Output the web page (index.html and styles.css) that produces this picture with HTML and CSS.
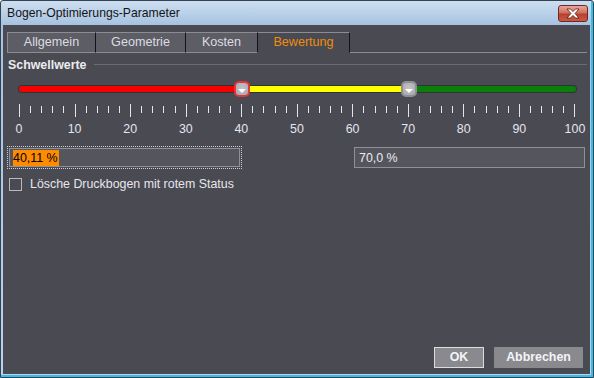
FILE: index.html
```html
<!DOCTYPE html>
<html lang="de">
<head>
<meta charset="utf-8">
<title>Bogen-Optimierungs-Parameter</title>
<link rel="stylesheet" href="styles.css">
</head>
<body>
<div class="window">
  <div class="titlebar">
    <span class="title">Bogen-Optimierungs-Parameter</span>
    <span class="close"><svg width="16" height="11" viewBox="0 0 16 11"><path d="M2 1 L5.5 1 L8 3.6 L10.5 1 L14 1 L10 5.5 L14 10 L10.5 10 L8 7.4 L5.5 10 L2 10 L6 5.5 Z" fill="#fff" stroke="#5a1a12" stroke-width="0.8"/></svg></span>
  </div>
  <div class="client">
    <div class="tabbar">
      <div class="tab tab-first tab-w1">Allgemein</div>
      <div class="tab tab-w2">Geometrie</div>
      <div class="tab tab-w3">Kosten</div>
      <div class="tab tab-active tab-w4">Bewertung</div>
      <div class="tab-fill"></div>
    </div>

    <div class="group-head"><span class="group-title">Schwellwerte</span><span class="group-line"></span></div>

    <div class="slider">
      <div class="track">
        <div class="seg seg-red" style="width:40.11%"></div>
        <div class="seg seg-yellow" style="width:29.89%"></div>
        <div class="seg seg-green" style="width:30%"></div>
      </div>
      <div class="handle handle-active" style="left:40.11%"><span class="arrow"></span></div>
      <div class="handle" style="left:70%"><span class="arrow"></span></div>
    </div>

    <div class="ticks">
      <span class="tick major"></span><span class="tick"></span><span class="tick"></span><span class="tick"></span><span class="tick"></span>
      <span class="tick major"></span><span class="tick"></span><span class="tick"></span><span class="tick"></span><span class="tick"></span>
      <span class="tick major"></span><span class="tick"></span><span class="tick"></span><span class="tick"></span><span class="tick"></span>
      <span class="tick major"></span><span class="tick"></span><span class="tick"></span><span class="tick"></span><span class="tick"></span>
      <span class="tick major"></span><span class="tick"></span><span class="tick"></span><span class="tick"></span><span class="tick"></span>
      <span class="tick major"></span><span class="tick"></span><span class="tick"></span><span class="tick"></span><span class="tick"></span>
      <span class="tick major"></span><span class="tick"></span><span class="tick"></span><span class="tick"></span><span class="tick"></span>
      <span class="tick major"></span><span class="tick"></span><span class="tick"></span><span class="tick"></span><span class="tick"></span>
      <span class="tick major"></span><span class="tick"></span><span class="tick"></span><span class="tick"></span><span class="tick"></span>
      <span class="tick major"></span><span class="tick"></span><span class="tick"></span><span class="tick"></span><span class="tick"></span>
      <span class="tick major"></span>
    </div>

    <div class="labels">
      <span>0</span><span>10</span><span>20</span><span>30</span><span>40</span><span>50</span><span>60</span><span>70</span><span>80</span><span>90</span><span>100</span>
    </div>

    <div class="fields">
      <div class="focus-ring">
        <div class="field"><span class="selected">40,11 %</span></div>
      </div>
      <div class="field field-right">70,0 %</div>
    </div>

    <div class="check-row">
      <span class="checkbox"></span>
      <span class="check-label">Lösche Druckbogen mit rotem Status</span>
    </div>

    <div class="buttons">
      <div class="btn btn-ok">OK</div>
      <div class="btn btn-cancel">Abbrechen</div>
    </div>
  </div>
</div>
</body>
</html>
```

FILE: styles.css
```css
* { box-sizing: border-box; }
html, body { margin: 0; padding: 0; }
body {
  width: 594px;
  height: 378px;
  overflow: hidden;
  font-family: "Liberation Sans", Arial, sans-serif;
  font-size: 12.4px;
}
.window {
  width: 594px;
  height: 378px;
  border: 1px solid #34414f;
  border-radius: 3px 3px 0 0;
  background: linear-gradient(to bottom, #cddff1 0, #a7c2e0 24px, #b9d3ec 100%);
  box-shadow: inset -2px -2px 0 #36bde8;
  display: flex;
  flex-direction: column;
}
.titlebar {
  height: 24px;
  display: flex;
  align-items: flex-start;
  justify-content: space-between;
  padding: 0 5px 0 6px;
}
.title {
  margin-top: 5px;
  color: #141414;
  font-size: 12.2px;
  line-height: 14px;
}
.close {
  margin-top: 4px;
  width: 30px;
  height: 17px;
  border: 1px solid #6e2a22;
  border-radius: 3px;
  background: linear-gradient(to bottom, #e8a699 0, #d0705f 45%, #b8402e 55%, #c85a46 100%);
  display: flex;
  align-items: center;
  justify-content: center;
}
.client {
  flex: 1;
  margin: 0 3px 3px 2px;
  background: #4a4a52;
  padding: 7px 3px 6px 4px;
  display: flex;
  flex-direction: column;
  color: #e2e2e8;
}

/* tabs */
.tabbar {
  display: flex;
  height: 21px;
}
.tab {
  height: 21px;
  background: #5d5d65;
  border-top: 1px solid #8c8c92;
  border-bottom: 1px solid #8c8c92;
  border-right: 1px solid #141416;
  color: #dcdce2;
  font-size: 12.6px;
  line-height: 18px;
  text-align: center;
}
.tab-first { border-left: 1px solid #8c8c92; }
.tab-w1 { width: 89px; }
.tab-w2 { width: 90px; }
.tab-w3 { width: 72px; }
.tab-w4 { width: 92px; }
.tab-active {
  background: #4a4a52;
  border-bottom: 1px solid transparent;
  color: #f28a0c;
}
.tab-fill {
  flex: 1;
  border-bottom: 1px solid #8c8c92;
}

/* group header */
.group-head {
  margin-top: 5px;
  height: 14px;
  display: flex;
  align-items: center;
  padding-left: 1px;
}
.group-title {
  font-weight: bold;
  color: #ececf0;
  line-height: 14px;
}
.group-line {
  flex: 1;
  height: 1px;
  margin-left: 7px;
  margin-top: -1px;
  background: #6a6a72;
}

/* slider */
.slider {
  position: relative;
  margin: 9px 11px 0 12px;
  height: 16px;
  display: flex;
  align-items: center;
}
.track {
  width: 100%;
  height: 6px;
  display: flex;
  border-radius: 3px;
  overflow: hidden;
  box-shadow: 0 0 0 1px rgba(20, 20, 24, 0.45);
}
.seg { height: 100%; }
.seg-red { background: #f80000; }
.seg-yellow { background: #ffff00; }
.seg-green { background: #0a800a; }
.handle {
  position: absolute;
  top: 0;
  width: 16px;
  height: 16px;
  margin-left: -8px;
  border: 2px solid #8e8e94;
  border-radius: 5px;
  background: radial-gradient(circle at 50% 40%, #c4c4c8 0, #a6a6aa 100%);
  display: flex;
  align-items: center;
  justify-content: center;
}
.handle-active { border-color: #e2353a; }
.arrow {
  width: 0;
  height: 0;
  margin-top: 3px;
  border-left: 4px solid transparent;
  border-right: 4px solid transparent;
  border-top: 4px solid #ffffff;
}

/* ticks */
.ticks {
  margin: 7px 11px 0 12px;
  height: 13px;
  display: flex;
  justify-content: space-between;
  align-items: flex-start;
}
.tick {
  width: 1px;
  height: 7px;
  margin-top: 2px;
  background: #e4e4ea;
}
.tick.major {
  height: 13px;
  margin-top: 0;
}

/* labels */
.labels {
  margin-top: 5px;
  height: 14px;
  display: flex;
  justify-content: space-between;
}
.labels span {
  width: 24px;
  text-align: center;
  line-height: 14px;
  color: #e4e6f0;
}

/* fields */
.fields {
  margin-top: 10px;
  height: 23px;
  display: flex;
  align-items: center;
  justify-content: space-between;
}
.focus-ring {
  width: 235px;
  height: 23px;
  border: 1px dotted #d0d0d4;
  padding: 1px;
}
.field {
  height: 19px;
  border: 1px solid #909096;
  background: #55555d;
  padding: 1px 0 0 3px;
  line-height: 16px;
  color: #ececf0;
}
.selected {
  display: inline-block;
  background: #ff8c00;
  color: #000;
  padding-right: 1px;
  line-height: 16px;
}
.field-right {
  width: 231px;
  height: 21px;
  margin-right: 2px;
  padding: 2px 0 0 4px;
}

/* checkbox */
.check-row {
  margin-top: 8px;
  height: 14px;
  display: flex;
  align-items: center;
}
.checkbox {
  width: 13px;
  height: 13px;
  margin-left: 2px;
  border: 1px solid #b8b8be;
}
.check-label {
  margin-left: 8px;
  line-height: 14px;
  color: #e6e6ec;
}

/* buttons */
.buttons {
  margin-top: auto;
  display: flex;
  justify-content: flex-end;
  gap: 10px;
  padding-right: 4px;
}
.btn {
  height: 21px;
  background: #8a8a8e;
  color: #f4f4f8;
  font-weight: bold;
  text-align: center;
  line-height: 19px;
  border: 1px solid #8a8a8e;
}
.btn-ok {
  width: 50px;
  border-color: #dcdce0;
}
.btn-cancel { width: 89px; }
```
